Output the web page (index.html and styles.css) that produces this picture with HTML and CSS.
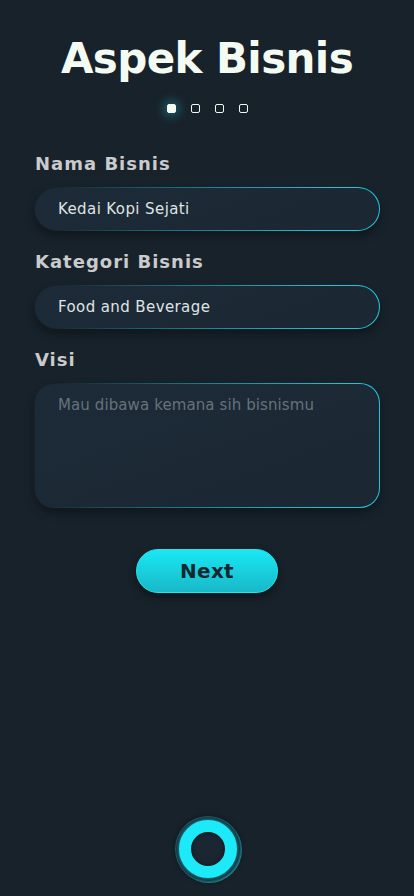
FILE: index.html
```html
<!DOCTYPE html>
<html>
<head>
<meta charset="utf-8">
<link rel="stylesheet" href="styles.css">
</head>
<body>
<div class="page">
  <h1 class="title">Aspek Bisnis</h1>
  <div class="dots">
    <span class="dot active"></span>
    <span class="dot"></span>
    <span class="dot"></span>
    <span class="dot"></span>
  </div>
  <form class="form">
    <label class="label">Nama Bisnis</label>
    <div class="field"><span class="value">Kedai Kopi Sejati</span></div>
    <label class="label">Kategori Bisnis</label>
    <div class="field"><span class="value">Food and Beverage</span></div>
    <label class="label">Visi</label>
    <div class="field area"><span class="placeholder">Mau dibawa kemana sih bisnismu</span></div>
  </form>
  <div class="actions"><button class="next" type="button">Next</button></div>
  <div class="bottom">
    <div class="orb"><div class="ring"></div></div>
  </div>
</div>
</body>
</html>
```
FILE: styles.css
```css
* { box-sizing: border-box; }
html, body { margin: 0; padding: 0; background: #18222b; }
body { font-family: "DejaVu Sans", "Noto Sans", sans-serif; }
.page {
  min-height: 896px;
  display: flex;
  flex-direction: column;
  padding: 0 34px;
}
.title {
  margin: 31px 0 0;
  text-align: center;
  font-family: "DejaVu Sans", sans-serif;
  font-weight: 700;
  font-size: 42px;
  line-height: 56px;
  color: #f4fbf2;
  letter-spacing: -0.6px;
}
.dots {
  display: flex;
  justify-content: center;
  gap: 15px;
  margin-top: 17px;
  height: 9px;
}
.dot {
  width: 9px;
  height: 9px;
  border: 1.5px solid #f2f8f0;
  border-radius: 2px;
}
.dot.active {
  background: #f4fbf2;
  box-shadow: 0 0 8px 4px rgba(30, 170, 185, 0.35);
}
.form {
  display: flex;
  flex-direction: column;
  margin-top: 40px;
}
.label {
  font-weight: 700;
  font-size: 18px;
  line-height: 22px;
  color: #c9cbcc;
  letter-spacing: 1px;
  margin-left: 1px;
  margin-bottom: 12px;
}
.field {
  height: 44px;
  border-radius: 22px;
  border: 1.5px solid transparent;
  background:
    linear-gradient(160deg, #1d2b38, #1b2733) padding-box,
    linear-gradient(100deg, rgba(32, 196, 214, 0) 5%, rgba(32, 196, 214, 0.55) 45%, #1fc6d8 85%) border-box;
  box-shadow: 0 5px 8px rgba(0, 0, 0, 0.35);
  display: flex;
  align-items: center;
  padding-left: 23px;
  margin-bottom: 20px;
}
.value {
  font-size: 15px;
  color: #dfe3e4;
  letter-spacing: 0.4px;
}
.area {
  height: 125px;
  border-radius: 20px;
  align-items: flex-start;
  padding-top: 12px;
  margin-bottom: 0;
}
.placeholder {
  font-size: 15px;
  color: #67727b;
  letter-spacing: 0.1px;
}
.actions {
  display: flex;
  justify-content: center;
  margin-top: 41px;
}
.next {
  width: 142px;
  height: 44px;
  border-radius: 22px;
  border: 1px solid #22e6f2;
  background: linear-gradient(180deg, #1ae8f4 0%, #18b8c8 100%);
  box-shadow: 0 4px 8px rgba(0, 0, 0, 0.45);
  font-family: "DejaVu Sans", sans-serif;
  font-weight: 700;
  font-size: 20px;
  color: #17262f;
  letter-spacing: 0.3px;
}
.bottom {
  margin-top: auto;
  display: flex;
  justify-content: center;
  padding-bottom: 14px;
}
.orb {
  width: 66px;
  height: 66px;
  border-radius: 50%;
  background: #1a2732;
  box-shadow: inset 0 0 0 1px rgba(40, 200, 215, 0.25), 1px 1px 0 0 rgba(40, 200, 215, 0.55), 0 0 4px rgba(0,0,0,0.5);
  display: flex;
  align-items: center;
  justify-content: center;
  margin-left: 2px;
}
.ring {
  width: 58px;
  height: 58px;
  border-radius: 50%;
  border: 12px solid #1ceaf8;
  background: #1a2732;
  box-shadow: 0 0 5px rgba(28, 234, 248, 0.7), inset 0 0 4px rgba(0, 0, 0, 0.6);
}
```
